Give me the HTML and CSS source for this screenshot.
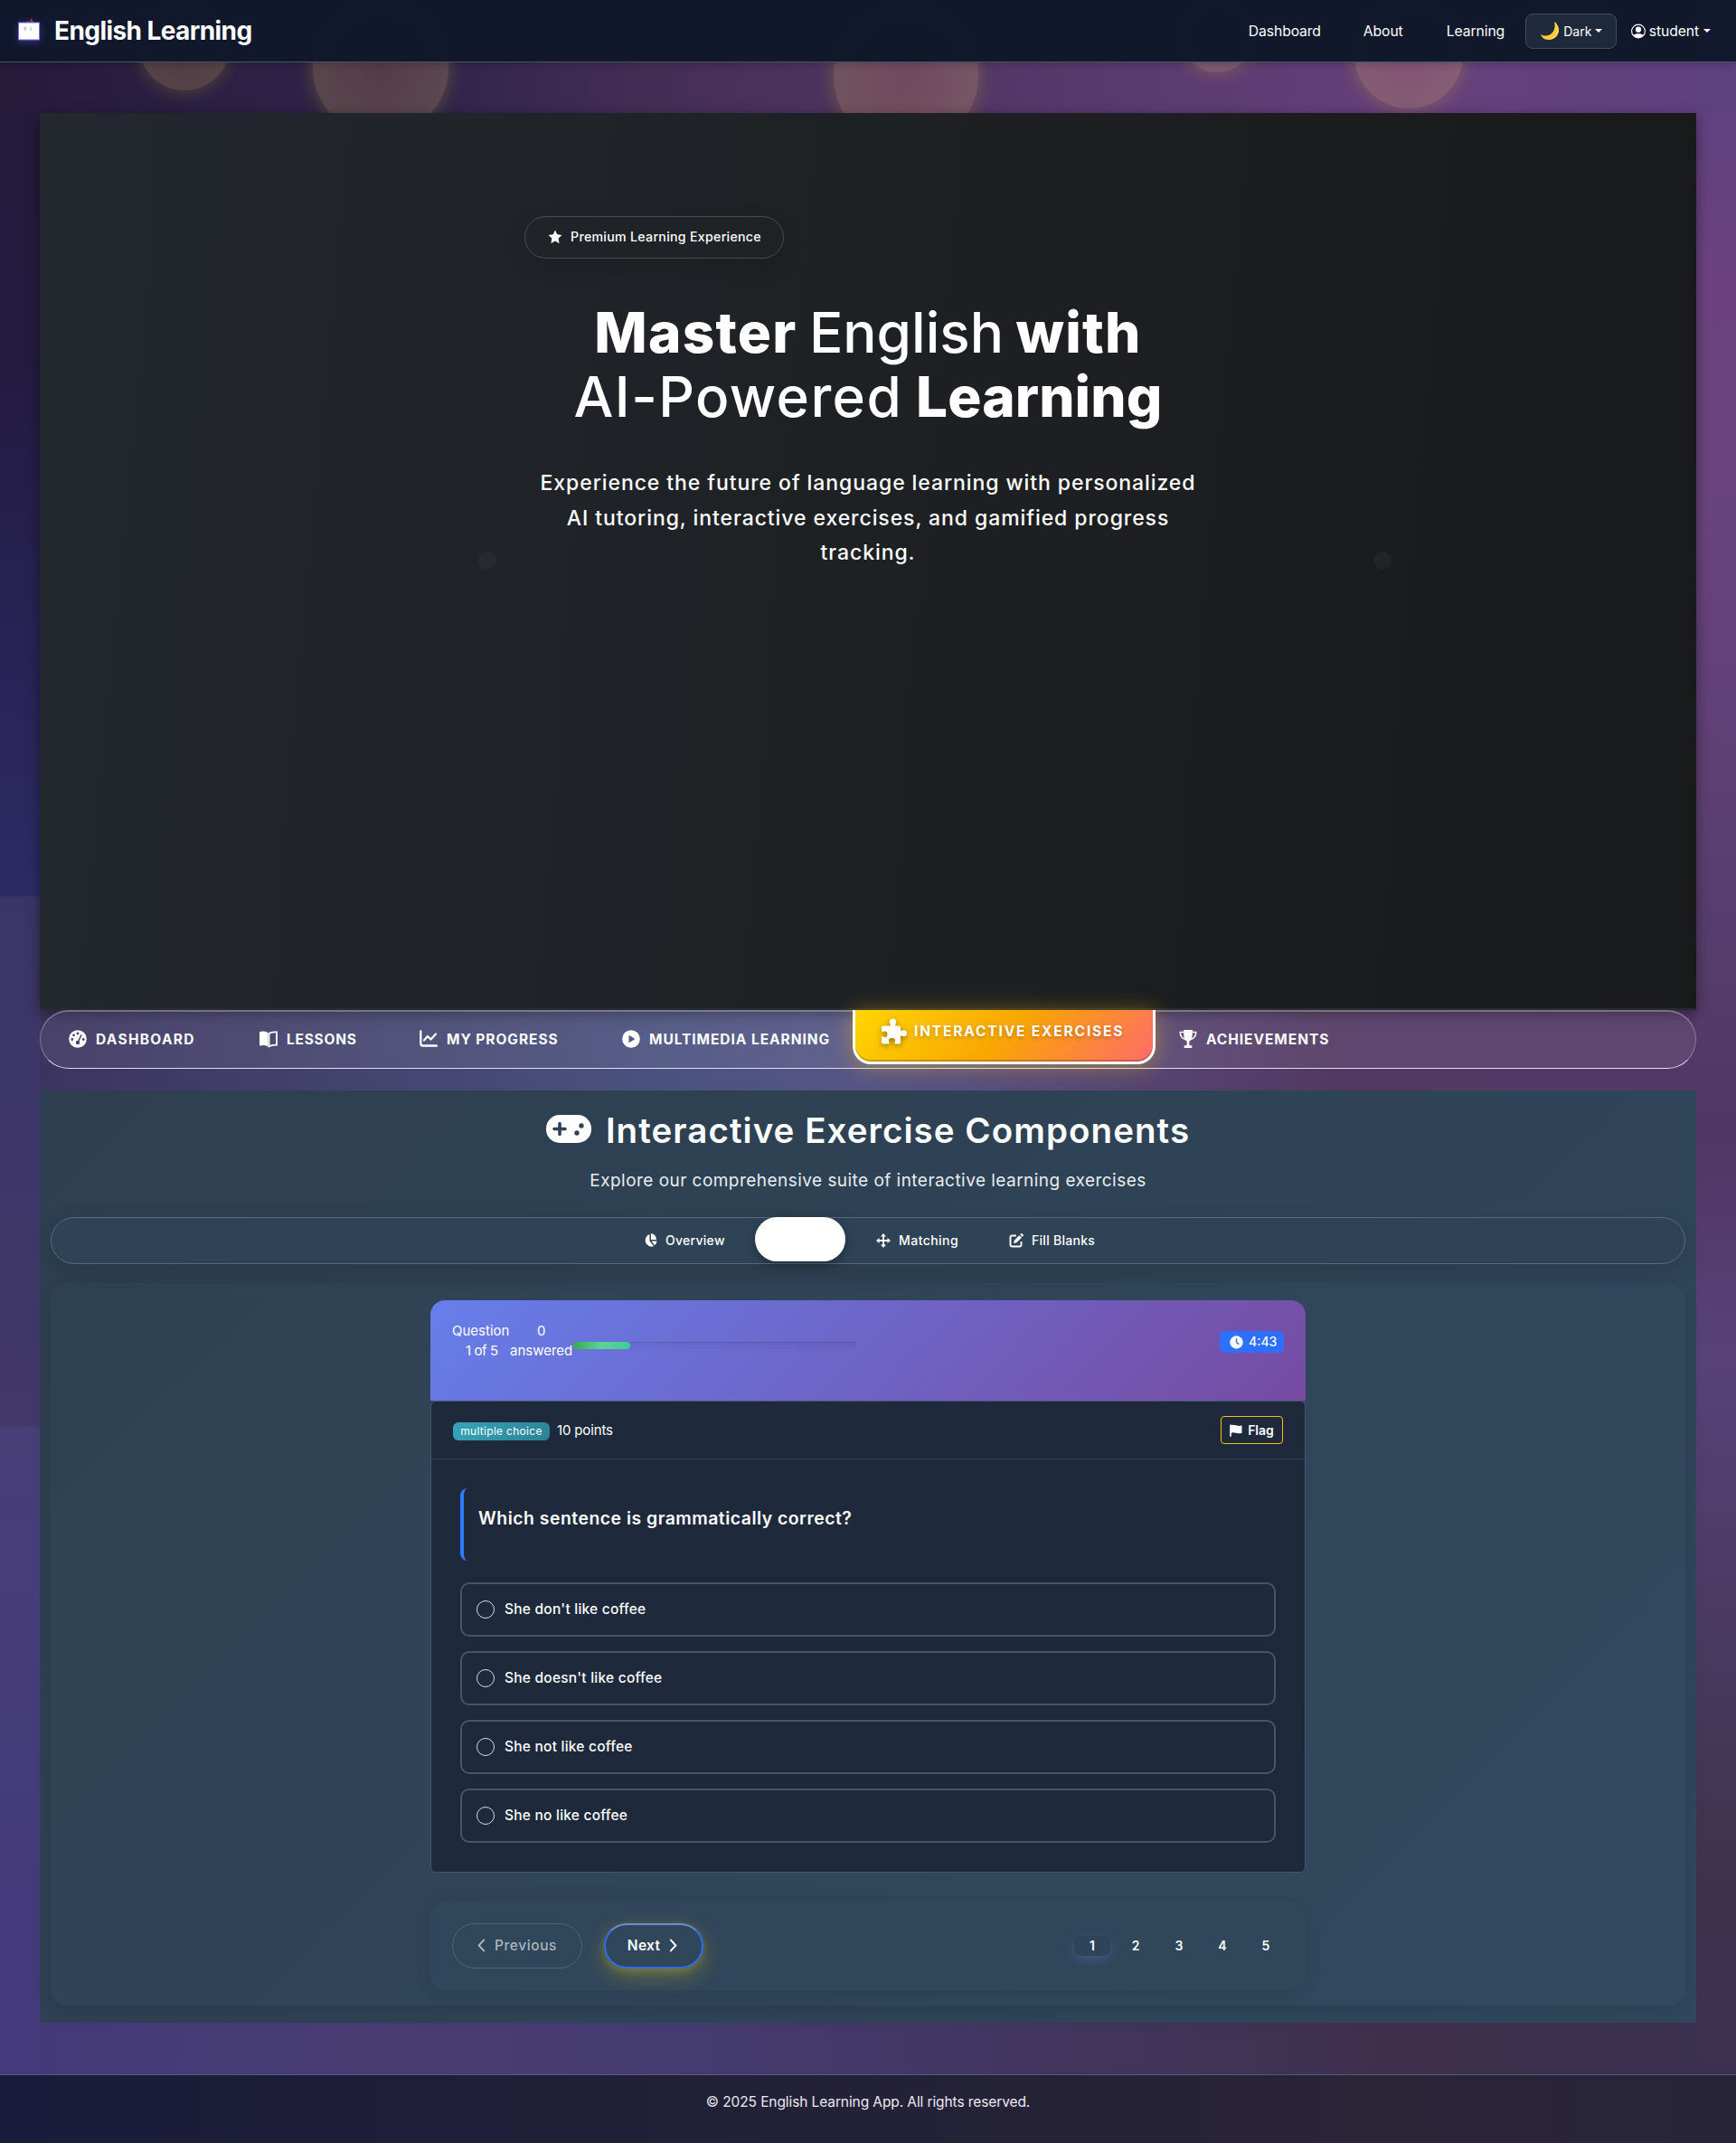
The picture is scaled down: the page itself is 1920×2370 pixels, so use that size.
FILE: index.html
```html
<!DOCTYPE html>
<html lang="en">
<head>
<meta charset="utf-8">
<title>English Learning</title>
<link rel="stylesheet" href="styles.css">
</head>
<body>
<div class="orbs"><i class="orb o1"></i><i class="orb o2"></i><i class="orb o3"></i><i class="orb o4"></i><i class="orb o5"></i></div>
<header class="navbar">
  <a class="brand"><svg class="logo" viewBox="0 0 28 28"><path d="M11 4h6v2h-6z" fill="#334155"/><path d="M16 2l3 5" stroke="#dc2638" stroke-width="1.5"/><rect x="2.5" y="6" width="23" height="19" fill="#fff" stroke="#7c6cf0"/><path d="M11 11H9v3h2M9 12.5h2M16 11v3h2" fill="none" stroke="#a79af5" stroke-width=".8"/></svg><span>English Learning</span></a>
  <nav class="links">
    <a class="l1">Dashboard</a><a class="l2">About</a><a class="l3">Learning</a>
    <button class="theme"><svg class="moon" viewBox="0 0 22 22"><path d="M15 1c9 7 5 20-7 20-4 0-7-3-8-6 9 5 18-3 15-14z" fill="#f9c938"/><path d="M15 1c9 7 5 20-7 20 10-3 13-12 7-20z" fill="#ffdf65"/></svg><span>Dark</span><i class="caret"></i></button>
    <a class="user"><svg viewBox="0 0 16 16"><circle cx="8" cy="8" r="7.4" fill="none" stroke="#fff" stroke-width="1.1"/><circle cx="8" cy="6.2" r="3.1" fill="#fff"/><path d="M2.6 12.5C4 10 12 10 13.4 12.5 11 16 5 16 2.600 12.500z" fill="#fff"/></svg><span>student</span><i class="caret"></i></a>
  </nav>
</header>
<main>
  <section class="hero">
    <i class="dot d1"></i><i class="dot d2"></i>
    <div class="hero-in">
      <div class="premium"><svg viewBox="0 0 16 16"><path d="M8 .4l2.200 4.900 5.300.6-3.900 3.700 1 5.600L8 12.500 3.400 15.200l1-5.600L.5 5.900l5.300-.6z" fill="#fff"/></svg><span>Premium Learning Experience</span></div>
      <h1><span class="r1"><b>Master</b> English <b>with</b></span><br><span class="r2">AI-Powered <b>Learning</b></span></h1>
      <p><span>Experience the future of language learning with personalized</span><br><span>AI tutoring, interactive exercises, and gamified progress</span><br><span>tracking.</span></p>
    </div>
  </section>
  <nav class="tabs">
    <a class="t1"><svg viewBox="0 0 20 20"><circle cx="10" cy="10" r="9.800" fill="#fff"/><g fill="#4a4573"><circle cx="10" cy="4" r="1.400"/><circle cx="5.500" cy="5.800" r="1.400"/><circle cx="3.800" cy="10.500" r="1.400"/><circle cx="16.200" cy="10.500" r="1.400"/><circle cx="10" cy="14" r="2.200"/></g><path d="M10 14l4-8.500" stroke="#4a4573" stroke-width="1.600"/></svg><span>DASHBOARD</span></a>
    <a class="t2"><svg viewBox="0 0 20 20"><path d="M0 2c4-1 7-.5 9.500 1v15.500C7 17 4 16.500 0 17.500z" fill="#fff"/><path d="M10.500 4c2.500-1.800 5-2 8.500-1.500v14.200c-3.500-.5-6 0-8.500 1.500z" fill="none" stroke="#fff" stroke-width="1.800"/></svg><span>LESSONS</span></a>
    <a class="t3"><svg viewBox="0 0 20 20"><path d="M1.300 1.500v13.500q0 2.500 2.500 2.500H19M5 11.500l4-4.500 3.500 3.500L18 4.500" fill="none" stroke="#fff" stroke-width="2.300" stroke-linejoin="round" stroke-linecap="round"/></svg><span>MY PROGRESS</span></a>
    <a class="t4"><svg viewBox="0 0 20 20"><circle cx="10" cy="10" r="9.800" fill="#fff"/><path d="M7.500 5.800v8.400L14.500 10z" fill="#56568a"/></svg><span>MULTIMEDIA LEARNING</span></a>
    <a class="t5"><svg viewBox="0 0 28 28"><path d="M0 10q0-2 2-2h7c1 0 1-1 .5-2C8 3 9.500 0 12.500 0S17 3 15.500 6c-.5 1-.5 2 .5 2h3q2 0 2 2v2.500c0 1 1 1.500 2 .8 2.500-1.500 5 .2 5 3s-2.500 4.500-5 3c-1-.7-2-.2-2 .8V26q0 2-2 2h-3.500c-1 0-1.500-1-.8-2 1.200-2.500-.5-4.500-3.200-4.500S7 23.500 8.300 26c.7 1 .2 2-.8 2H2q-2 0-2-2v-5c0-1 1-1.500 2-.8 2.500 1.500 4.500 0 4.500-2.700S4.500 13 2 14.500c-1 .6-2 .2-2-.8z" fill="#fff"/></svg><span>INTERACTIVE EXERCISES</span></a>
    <a class="t6"><svg viewBox="0 0 20 20"><path d="M5 0h10l-.3 6c-.2 4-2 6-3.400 6.800V16q0 1.300 1.500 1.300h1.500V20H5.700v-2.700h1.500q1.500 0 1.500-1.300v-3.200C7.300 12 5.500 10 5.300 6z" fill="#fff"/><path d="M5 2.500H1.300C1.300 7 3.500 9.500 7 10.500M15 2.500h3.700C18.700 7 16.500 9.500 13 10.500" fill="none" stroke="#fff" stroke-width="1.500"/></svg><span>ACHIEVEMENTS</span></a>
  </nav>
  <section class="exercises">
    <h2><svg viewBox="0 0 50 31"><rect width="50" height="31" rx="15" fill="#fff"/><path d="M15 9.500v12M9 15.500h12" stroke="#2f4153" stroke-width="3.600" stroke-linecap="round"/><circle cx="34" cy="20" r="2.700" fill="#2f4153"/><circle cx="39" cy="12" r="2.700" fill="#2f4153"/></svg><span>Interactive Exercise Components</span></h2>
    <p class="sub"><span>Explore our comprehensive suite of interactive learning exercises</span></p>
    <nav class="pills">
      <a class="k1"><svg viewBox="0 0 16 16"><path d="M7.500 1v7.500l4.500 5.800A7 7 0 1 1 7.500 1z" fill="#fff"/><path d="M9 0a7 7 0 0 1 6 7H9zM9.500 8.500h6a6 6 0 0 1-2.500 4.700z" fill="#fff"/></svg><span>Overview</span></a>
      <a class="k2" aria-label="Quiz"></a>
      <a class="k3"><svg viewBox="0 0 16 16"><path d="M8 2v12M2 8h12" stroke="#fff" stroke-width="1.800"/><path d="M8 0l3 3.500H5zM8 16l3-3.500H5zM0 8l3.500-3v6zM16 8l-3.500-3v6z" fill="#fff"/></svg><span>Matching</span></a>
      <a class="k4"><svg viewBox="0 0 16 16"><path d="M8 2.500H3.500q-2 0-2 2v8q0 2 2 2h8q2 0 2-2V9" fill="none" stroke="#fff" stroke-width="1.900"/><path d="M5 11l.8-3.300 5.500-5.500 2.600 2.600-5.500 5.500zM12.200 1.300l1.100-1q.7-.5 1.300.1l1.100 1.200q.5.7-.1 1.300l-1 1z" fill="#fff"/></svg><span>Fill Blanks</span></a>
    </nav>
    <div class="panel">
      <div class="quiz">
        <header class="qhead">
          <div class="qno"><span>Question</span><span class="ind">1 of 5</span></div>
          <div class="ans"><span class="zero">0</span><span>answered</span></div>
          <div class="progress"><i style="width:20%"></i></div>
          <div class="timer"><svg viewBox="0 0 16 16"><circle cx="8" cy="8" r="7.700" fill="#fff"/><path d="M8 3.500V8.200l3 2" fill="none" stroke="#2d6fff" stroke-width="1.500"/></svg><span>4:43</span></div>
        </header>
        <article class="card">
          <div class="meta"><span class="kind">multiple choice</span><span class="points">10 points</span><button class="flag"><svg viewBox="0 0 14 14"><path d="M1 .5v13.300" stroke="#fff" stroke-width="1.600"/><path d="M1 1.500c4-2 6 1.500 12.500 0v8.300C8 11.500 5 8 1 10z" fill="#fff"/></svg><span>Flag</span></button></div>
          <div class="body">
            <h3><span>Which sentence is grammatically correct?</span></h3>
            <label class="opt"><i></i><span>She don't like coffee</span></label>
            <label class="opt"><i></i><span>She doesn't like coffee</span></label>
            <label class="opt"><i></i><span>She not like coffee</span></label>
            <label class="opt"><i></i><span>She no like coffee</span></label>
          </div>
        </article>
        <footer class="pager">
          <button class="prev"><svg viewBox="0 0 8 14"><path d="M7 .8L1.300 7 7 13.200" fill="none" stroke="currentColor" stroke-width="1.800"/></svg><span>Previous</span></button>
          <button class="next"><span>Next</span><svg viewBox="0 0 8 14"><path d="M1 .8L6.700 7 1 13.200" fill="none" stroke="currentColor" stroke-width="1.800"/></svg></button>
          <div class="nums"><b class="on">1</b><b>2</b><b>3</b><b>4</b><b>5</b></div>
        </footer>
      </div>
    </div>
  </section>
</main>
<footer class="foot"><span>© 2025 English Learning App. All rights reserved.</span></footer>
</body>
</html>
```
FILE: styles.css
```css
* { box-sizing: border-box; }
body {
  margin: 0; position: relative; min-height: 2370px; overflow-x: hidden; display: flex; flex-direction: column;
  color: #fff; font-family: Inter, "Liberation Sans", sans-serif; font-size: 16px; background-color: #43396e;
  background-image:
    linear-gradient(90deg, #251a3a, #2a1f42 10%, #31254c 26%, #452e56 38%, #5a3b6f 66%, #66407b 82%, #5e407f),
    linear-gradient(#251a3a 70px, #231b40 400px, #292458 750px, #2d2b66 991px, #3b3567 992px, #42386a 1578px, #483f79 1579px, #43397c),
    linear-gradient(#5e407f 70px, #6b427f 300px, #69437e 600px, #563d6c 1050px, #513663 1250px, #584278 1500px, #3e344e 2050px, #3c3050),
    linear-gradient(90deg, #3c345f, #43426c 17%, #4b527f 38%, #575586 50%, #594b79 60%, #523963 78%, #523866),
    linear-gradient(90deg, #43397a, #483e74 20%, #443b70 40%, #42365f 60%, #3e304c 80%, #3a3050);
  background-repeat: no-repeat;
  background-size: 100% 57px, 44px 2294px, 44px 2294px, 1832px 94px, 100% 57px;
  background-position: 0 68px, 0 0, 1876px 0, 44px 1114px, 0 2237px;
}
h1, h2, h3, p { margin: 0; }
button { font: inherit; color: inherit; background: none; margin: 0; padding: 0; }
svg { display: block; flex: none; }
span { white-space: nowrap; }

.orbs { position: absolute; inset: 0 0 auto 0; height: 200px; overflow: hidden; }
.orb { position: absolute; border-radius: 50%; background: radial-gradient(circle, #ffa14c30 0, #ffd26034 75%); box-shadow: 0 0 20px #ffd7003c; }
.o1 { left: 154px; top: 0; width: 100px; height: 100px; }
.o2 { left: 346px; top: 0; width: 150px; height: 150px; }
.o3 { left: 922px; top: 4px; width: 160px; height: 160px; }
.o4 { left: 1306px; top: 0; width: 80px; height: 80px; }
.o5 { left: 1498px; top: 0; width: 120px; height: 120px; }

.navbar { position: relative; height: 69px; padding: 0 28px 0 18px; display: flex; justify-content: space-between; align-items: center; background: #0f172af7; border-bottom: 1px solid #475569; box-shadow: 0 2px 8px #0003; }
.brand { display: flex; align-items: center; gap: 14px; font-size: 28px; font-weight: 700; letter-spacing: -.58px; }
.logo { width: 28px; height: 28px; margin-top: -2px; filter: drop-shadow(0 2px 4px #6366f166); }
.links { display: flex; align-items: center; height: 68px; font-size: 15.700px; letter-spacing: -.1px; }
.l1 { width: 127px; } .l2 { width: 92px; } .l3 { width: 87px; }
.theme { width: 101px; height: 39px; border: 1px solid #414d60; border-radius: 8px; background: #1e293b; display: flex; align-items: center; justify-content: center; gap: 3px; font-size: 14px; margin-right: 16px; padding-left: 2px; }
.moon { width: 22px; height: 22px; }
.caret { border: 4px solid transparent; border-top-color: #fff; border-bottom: 0; margin-left: 1px; }
.user { display: flex; align-items: center; gap: 4px; }
.user svg { width: 16px; height: 17px; }

main { padding: 56px 44px 57px; position: relative; }
.hero { position: relative; height: 992px; background: linear-gradient(95deg, #23282f, #1e2124 48%, #191a1b 92%); box-shadow: 0 4px 14px #0006; border-bottom: 2px solid #272a30; }
.hero-in { width: 760px; margin: 0 auto; padding-top: 114px; }
.premium { width: 287px; height: 47px; border: 1px solid #484b4f; border-radius: 24px; display: flex; align-items: center; padding: 0 0 2px 25px; gap: 9px; font-size: 14.200px; letter-spacing: .28px; font-weight: 500; box-shadow: 0 8px 24px #0002; }
.premium svg { width: 16px; height: 16px; }
.hero h1 { margin-top: 46px; text-align: center; font-size: 62px; line-height: 71px; font-weight: 500; word-spacing: -3px; }
.hero h1 b { font-weight: 800; }
.r1 { letter-spacing: 0; } .r1 b { letter-spacing: 1.200px; }
.r2 { letter-spacing: 1.400px; } .r2 b { letter-spacing: .1px; }
.hero p { margin-top: 41px; text-align: center; font-size: 23px; line-height: 38.500px; font-weight: 500; letter-spacing: .92px; }
.dot { position: absolute; top: 485px; width: 20px; height: 20px; border-radius: 50%; background: #ffffff09; }
.d1 { left: 485px; } .d2 { left: 1475px; }

.tabs { position: relative; height: 65px; border: 1px solid #ffffff48; border-top: 2px solid #ffffff48; border-bottom-color: #e4dcf0; border-radius: 32px; background: #ffffff12; display: grid; grid-template-columns: 210px 178px 224px 255px 335px 200px; padding-left: 31px; font-size: 15.500px; font-weight: 700; letter-spacing: .95px; }
.tabs a { display: flex; align-items: center; gap: 10px; padding-bottom: 2px; }
.tabs svg { width: 20px; height: 20px; }
.tabs .t1 { letter-spacing: 1.300px; }
.tabs .t2 { letter-spacing: .75px; padding-left: 1px; }
.tabs .t5 { height: 60px; margin-top: -2px; padding: 0 0 10px 29px; gap: 8px; letter-spacing: 1.830px; border: 3px solid #fff; border-top: 0; border-radius: 0 0 20px 20px; background: linear-gradient(135deg, #ffd700, #f9a602 50%, #ff6b6b); box-shadow: 0 2px 24px #ffc60066, inset 0 -2px 0 #0003; text-shadow: 0 2px 4px #0004; }
.tabs .t5 svg { width: 28px; height: 29px; filter: drop-shadow(0 2px 3px #0006); }
.tabs .t6 { padding-left: 26px; }

.exercises { margin-top: 24px; height: 1031px; padding: 0 12px; background: linear-gradient(135deg, #2d3f50, #31485d); }
.exercises h2 { display: flex; justify-content: center; align-items: center; gap: 16px; height: 88px; font-size: 38.500px; font-weight: 600; letter-spacing: 1.050px; padding-bottom: 1px; }
.exercises h2 svg { width: 50px; height: 31px; margin-top: -2px; }
.sub { text-align: center; font-size: 19px; line-height: 24px; color: #e8ecf0; letter-spacing: .46px; }
.pills { position: relative; height: 52px; margin-top: 28px; border: 1px solid #5b6a7a; border-radius: 26px; display: flex; align-items: center; background: #2f4357; font-size: 14px; letter-spacing: .28px; font-weight: 500; padding: 0 0 1px 654px; box-shadow: 0 8px 24px #0002; }
.pills a { display: flex; align-items: center; gap: 9px; }
.pills svg { width: 16px; height: 16px; }
.k1 { width: 124px; } .k3 { width: 147px; letter-spacing: .45px; }
.pills .k2 { width: 100px; height: 49px; margin: -2px 34px 0 0; border-radius: 25px; background: #fff; box-shadow: 0 4px 12px #0005; }
.panel { margin-top: 21px; height: 799px; padding-top: 19px; border-radius: 20px; background: linear-gradient(135deg, #2e4252, #324960); box-shadow: 0 8px 24px #0000001c; }
.quiz { width: 968px; margin: 0 auto; }
.qhead { height: 111px; border-radius: 16px 16px 0 0; background: linear-gradient(135deg, #667eea, #764ba2); display: flex; align-items: flex-start; padding: 23px 24px 0; font-size: 15px; line-height: 22px; }
.qno, .ans { display: flex; flex-direction: column; }
.qno { width: 64px; } .ans { width: 70px; }
.ind { margin-left: 15px; letter-spacing: -.4px; } .zero { margin-left: 30px; }
.progress { width: 313px; height: 8px; margin-top: 23px; border-radius: 4px; background: #00000008; box-shadow: inset 0 1px 2px #0002; }
.progress i { display: block; height: 8px; border-radius: 4px; background: linear-gradient(90deg, #34ad50, #60d29b 50%, #3dcb98); }
.timer { width: 71px; height: 24px; margin: 11px 0 0 auto; border-radius: 6px; background: #2d6fff; display: flex; align-items: center; padding-left: 11px; gap: 6px; font-size: 14px; font-weight: 500; }
.timer svg { width: 15px; height: 15px; }
.card { height: 522px; border: 1px solid #475569; border-radius: 6px; background: #1e293b; }
.meta { height: 64px; border-bottom: 1px solid #334166; display: flex; align-items: center; padding: 0 24px; }
.kind { width: 107px; height: 20px; margin-top: 2px; border-radius: 6px; text-align: center; font-size: 12px; line-height: 19px; letter-spacing: .3px; background: linear-gradient(135deg, #36a5bb, #2a8294); }
.points { margin-left: 8px; font-size: 15px; letter-spacing: -.15px; }
.flag { width: 69px; height: 31px; margin-left: auto; border: 1px solid #ffc107; border-radius: 4px; display: flex; align-items: center; justify-content: center; gap: 6px; font-size: 14px; font-weight: 600; }
.flag svg { width: 14px; height: 14px; }
.body { padding: 32px; }
.body h3 { height: 80px; border-left: 4px solid #2d7bff; border-radius: 8px; padding: 21px 0 0 16px; font-size: 19.400px; line-height: 24px; font-weight: 600; letter-spacing: .5px; margin-bottom: 24px; }
.opt { height: 60px; margin-bottom: 16px; border: 2px solid #475569; border-radius: 10px; display: flex; align-items: center; padding: 0 0 2px 16px; gap: 11px; font-weight: 500; font-size: 15.500px; letter-spacing: .23px; }
.opt i { width: 20px; height: 20px; margin-top: 1px; border: 1px solid #d7dce3; border-radius: 50%; }
.pager { height: 98px; margin-top: 32px; padding: 0 24px; border-radius: 16px; background: #30465a; box-shadow: 0 0 24px #0000000d, 0 8px 20px #0000000d; display: flex; align-items: center; font-size: 15.500px; font-weight: 600; }
.pager button { height: 50px; border-radius: 25px; display: flex; align-items: center; justify-content: center; padding-bottom: 1px; }
.pager svg { width: 9px; height: 15px; }
.pager .prev { width: 144px; border: 1px solid #536577; color: #abb5be; gap: 10px; font-weight: 500; letter-spacing: .6px; }
.pager .next { width: 110px; margin-left: 24px; padding-right: 3px; border: 2px solid #2d6ff0; border-top-color: #6990d0; gap: 10px; letter-spacing: .3px; box-shadow: 0 8px 24px #ffd70045, 0 3px 9px #ffd70033; }
.nums { display: flex; margin-left: auto; gap: 8px; font-size: 14px; }
.nums b { width: 40px; height: 22px; line-height: 21px; text-align: center; font-weight: 600; border-radius: 8px; }
.nums .on { background: #2f4459; box-shadow: 0 4px 12px #667eea55; }

.foot { height: 76px; border-top: 1px solid #565a80; background: linear-gradient(90deg, #1a1b3a, #202037 40%, #2a2437 80%, #27243a); text-align: center; font-size: 15.500px; letter-spacing: -.1px; line-height: 59px; color: #eceaf2; }
```
